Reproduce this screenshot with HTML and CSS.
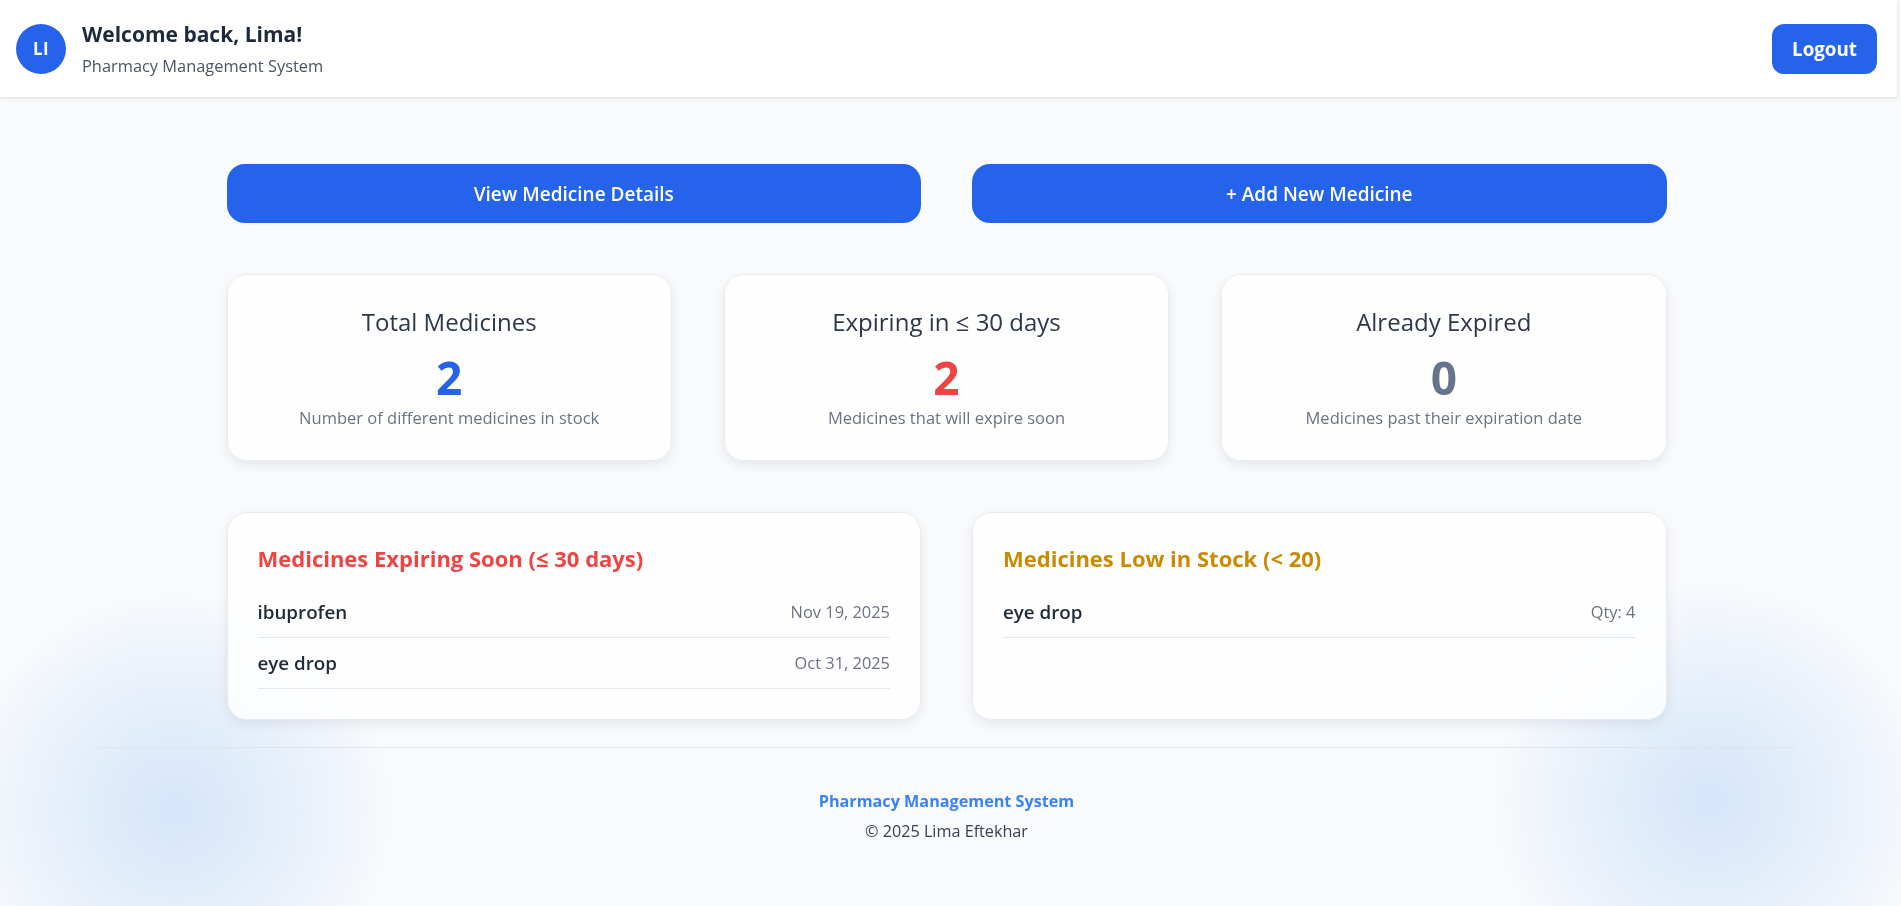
FILE: index.html
```html
<!DOCTYPE html>
<html lang="en">
<head>
<meta charset="utf-8">
<title>Pharmacy Dashboard</title>
<link rel="stylesheet" href="styles.css">
</head>
<body>
<div class="blob blob-left"></div>
<div class="blob blob-right"></div>
<div class="page">
  <header class="topbar">
    <div class="user">
      <div class="avatar">LI</div>
      <div class="user-text">
        <h1 class="welcome">Welcome back, Lima!</h1>
        <p class="subtitle">Pharmacy Management System</p>
      </div>
    </div>
    <button class="btn logout">Logout</button>
  </header>

  <main class="container">
    <div class="actions">
      <button class="btn action">View Medicine Details</button>
      <button class="btn action">+ Add New Medicine</button>
    </div>

    <section class="stats">
      <div class="card stat">
        <h2 class="stat-title">Total Medicines</h2>
        <div class="stat-value blue">2</div>
        <p class="stat-desc">Number of different medicines in stock</p>
      </div>
      <div class="card stat">
        <h2 class="stat-title">Expiring in ≤ 30 days</h2>
        <div class="stat-value red">2</div>
        <p class="stat-desc">Medicines that will expire soon</p>
      </div>
      <div class="card stat">
        <h2 class="stat-title">Already Expired</h2>
        <div class="stat-value gray">0</div>
        <p class="stat-desc">Medicines past their expiration date</p>
      </div>
    </section>

    <section class="lists">
      <div class="card list-card">
        <h3 class="list-title red">Medicines Expiring Soon (≤ 30 days)</h3>
        <ul class="list">
          <li class="row"><span class="name">ibuprofen</span><span class="meta">Nov 19, 2025</span></li>
          <li class="row"><span class="name">eye drop</span><span class="meta">Oct 31, 2025</span></li>
        </ul>
      </div>
      <div class="card list-card">
        <h3 class="list-title amber">Medicines Low in Stock (&lt; 20)</h3>
        <ul class="list">
          <li class="row"><span class="name">eye drop</span><span class="meta">Qty: 4</span></li>
        </ul>
      </div>
    </section>
  </main>

  <footer class="footer">
    <p class="footer-brand">Pharmacy Management System</p>
    <p class="footer-copy">© 2025 Lima Eftekhar</p>
  </footer>
</div>
</body>
</html>
```

FILE: styles.css
```css
* { box-sizing: border-box; }

html, body {
  margin: 0;
  padding: 0;
  background: #f8fafc;
  font-family: "Open Sans", "Noto Sans", "Liberation Sans", sans-serif;
  color: #1f2937;
}

.page {
  position: relative;
  z-index: 1;
  margin-right: 8px;
}

.blob {
  position: fixed;
  width: 440px;
  height: 440px;
  border-radius: 50%;
  background: radial-gradient(circle, rgba(147, 190, 245, 0.34) 0%, rgba(147, 190, 245, 0.18) 35%, rgba(147, 190, 245, 0) 70%);
  z-index: 0;
  pointer-events: none;
}
.blob-left { left: -45px; top: 590px; }
.blob-right { left: 1490px; top: 580px; }

/* Header */
.topbar {
  height: 97px;
  background: #ffffff;
  box-shadow: 0 1px 4px rgba(0, 0, 0, 0.12);
  display: flex;
  align-items: center;
  justify-content: space-between;
  padding: 0 20px 0 16px;
  margin-right: -4px;
}

.user {
  display: flex;
  align-items: center;
  gap: 16px;
}

.avatar {
  width: 50px;
  height: 50px;
  border-radius: 50%;
  background: #2563eb;
  color: #fff;
  font-weight: 700;
  font-size: 17px;
  display: flex;
  align-items: center;
  justify-content: center;
  letter-spacing: 0.5px;
}

.welcome {
  margin: 0;
  font-size: 21px;
  line-height: 28px;
  font-weight: 700;
  color: #1e293b;
}

.subtitle {
  margin: 7px 0 0;
  font-size: 16.4px;
  line-height: 22px;
  color: #4b5563;
}

.btn {
  border: none;
  background: #2563eb;
  color: #fff;
  font-family: inherit;
  cursor: pointer;
}

.logout {
  height: 50px;
  padding: 0 20px;
  border-radius: 12px;
  font-size: 18.8px;
  font-weight: 700;
}

/* Main */
.container {
  width: 1440px;
  margin: 0 auto;
  padding-top: 67px;
  display: flex;
  flex-direction: column;
  gap: 51px;
}

.actions {
  display: grid;
  grid-template-columns: 1fr 1fr;
  gap: 51px;
}

.action {
  height: 59px;
  border-radius: 18px;
  font-size: 19px;
  font-weight: 600;
}

.card {
  background: rgba(255, 255, 255, 0.82);
  border: 1px solid #e8eaef;
  border-radius: 20px;
  box-shadow: 0 4px 12px rgba(15, 23, 42, 0.08);
}

.stats {
  display: grid;
  grid-template-columns: repeat(3, 1fr);
  gap: 52px;
}

.stat {
  height: 187px;
  padding-top: 30px;
  text-align: center;
}

.stat-title {
  margin: 0;
  font-size: 24px;
  line-height: 34px;
  font-weight: 500;
  color: #2d3748;
}

.stat-value {
  margin-top: 13px;
  font-size: 46px;
  line-height: 50px;
  font-weight: 700;
}

.stat-desc {
  margin: 4px 0 0;
  font-size: 16.5px;
  line-height: 24px;
  color: #6b7280;
}

.blue { color: #2563eb; }
.red { color: #ef4444; }
.gray { color: #64748b; }
.amber { color: #ca8a04; }

.lists {
  display: grid;
  grid-template-columns: 1fr 1fr;
  gap: 51px;
}

.list-card {
  min-height: 206px;
  padding: 30px 30px 30px;
}

.list-title {
  margin: 0 0 14px;
  font-size: 22px;
  line-height: 30px;
  font-weight: 700;
}

.list {
  list-style: none;
  margin: 0;
  padding: 0;
}

.row {
  display: flex;
  justify-content: space-between;
  align-items: center;
  padding: 12px 0;
  height: 51px;
  line-height: 26px;
  border-bottom: 1px solid #e5e7eb;
}

.name {
  font-size: 18.8px;
  font-weight: 600;
  color: #1f2937;
}

.meta {
  font-size: 16.4px;
  color: #6b7280;
}

/* Footer */
.footer {
  margin: 27px 97px 0 97px;
  padding: 41px 0 60px;
  border-top: 1px solid #dfe3ea;
  text-align: center;
}

.footer-brand {
  margin: 0 0 6px;
  font-size: 16.2px;
  line-height: 24px;
  font-weight: 700;
  color: #3b82f6;
}

.footer-copy {
  margin: 0;
  font-size: 16.2px;
  line-height: 24px;
  color: #374151;
}
```
